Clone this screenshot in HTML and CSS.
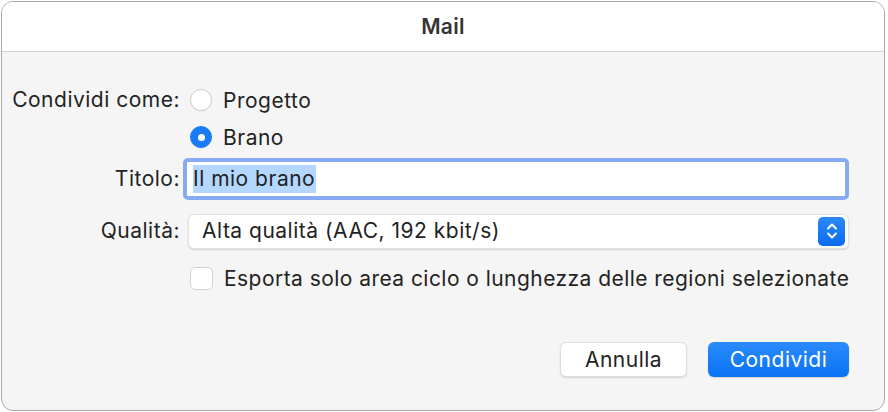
FILE: index.html
```html
<!DOCTYPE html>
<html lang="it">
<head>
    <meta charset="UTF-8">
    <meta name="viewport" content="width=device-width, initial-scale=1.0">
    <title>Mail</title>
    <link rel="stylesheet" href="styles.css">
</head>
<body>
    <div class="window">
        <div class="titlebar">Mail</div>
        <div class="content">
            <div class="form">
                <div class="label">Condividi come:</div>
                <div class="control">
                    <span class="radio"></span>
                    <span class="text">Progetto</span>
                </div>

                <div class="label"></div>
                <div class="control row-brano">
                    <span class="radio checked"></span>
                    <span class="text">Brano</span>
                </div>

                <div class="label row-title">Titolo:</div>
                <div class="control row-title">
                    <div class="input-ring">
                        <div class="input"><span class="selected">Il mio brano</span></div>
                    </div>
                </div>

                <div class="label row-quality">Qualità:</div>
                <div class="control row-quality">
                    <div class="select">
                        <span class="select-text">Alta qualità (AAC, 192 kbit/s)</span>
                        <span class="stepper">
                            <svg width="14" height="20" viewBox="0 0 14 20">
                                <path d="M3 7.5 L7 3.5 L11 7.5" fill="none" stroke="#fff" stroke-width="2" stroke-linecap="round" stroke-linejoin="round"/>
                                <path d="M3 12.5 L7 16.5 L11 12.5" fill="none" stroke="#fff" stroke-width="2" stroke-linecap="round" stroke-linejoin="round"/>
                            </svg>
                        </span>
                    </div>
                </div>

                <div class="label"></div>
                <div class="control row-check">
                    <span class="checkbox"></span>
                    <span class="text">Esporta solo area ciclo o lunghezza delle regioni selezionate</span>
                </div>
            </div>
            <div class="buttons">
                <button class="btn">Annulla</button>
                <button class="btn primary">Condividi</button>
            </div>
        </div>
    </div>
</body>
</html>
```

FILE: styles.css
```css
body{
    margin: 0;
    background-color: #ffffff;
    font-family: Inter, "Noto Sans", sans-serif;
    color: #232323;
}
.window{
    margin: 1px;
    width: 882px;
    height: 408px;
    border: 1px solid #a8a8a8;
    border-radius: 12px;
    overflow: hidden;
    background-color: #f5f5f5;
    display: flex;
    flex-direction: column;
}
.titlebar{
    height: 49px;
    background-color: #ffffff;
    border-bottom: 1px solid #d2d2d2;
    display: flex;
    justify-content: center;
    align-items: center;
    font-size: 21px;
    font-weight: 600;
    letter-spacing: 0.3px;
    color: #333;
}
.content{
    flex: 1;
    padding: 33px 35px 0 0;
}
.form{
    display: grid;
    grid-template-columns: 178px 1fr;
    column-gap: 7px;
    align-items: center;
    font-size: 21px;
    letter-spacing: 0.5px;
}
.label{
    text-align: right;
    height: 30px;
    line-height: 30px;
}
.control{
    height: 30px;
    display: flex;
    align-items: center;
    white-space: nowrap;
}
.row-brano{
    margin-top: 7px;
}
.label.row-title, .control.row-title{
    height: 42px;
    line-height: 42px;
    margin-top: 6px;
}
.control.row-title{
    margin-left: -4px;
}
.label.row-quality, .control.row-quality{
    height: 36px;
    line-height: 36px;
    margin-top: 13px;
}
.control.row-check{
    margin-top: 14px;
    letter-spacing: 0.45px;
}
.radio{
    width: 22px;
    height: 22px;
    border-radius: 50%;
    background-color: #fff;
    border: 1px solid #d0d0d0;
    box-shadow: 0 0.5px 1px rgba(0,0,0,0.08);
    margin-left: 3px;
    margin-right: 11px;
    box-sizing: border-box;
    position: relative;
    flex-shrink: 0;
}
.radio.checked{
    background-color: #1a7bf6;
    border-color: #1a7bf6;
}
.radio.checked::after{
    content: "";
    position: absolute;
    left: 6.5px;
    top: 6.5px;
    width: 7px;
    height: 7px;
    border-radius: 50%;
    background-color: #fff;
}
.checkbox{
    width: 23px;
    height: 23px;
    border-radius: 5px;
    background-color: #fff;
    border: 1px solid #d4d4d4;
    box-sizing: border-box;
    margin-left: 3px;
    margin-right: 11px;
    flex-shrink: 0;
}
.input-ring{
    flex: 1;
    height: 42px;
    box-sizing: border-box;
    border: 4px solid #86abf4;
    border-radius: 5px;
    background-color: #fff;
    display: flex;
    align-items: center;
}
.input{
    flex: 1;
    height: 34px;
    line-height: 30px;
    padding-left: 6px;
    display: flex;
    align-items: center;
}
.selected{
    background-color: #b3d7ff;
    line-height: 28px;
    padding-right: 1px;
}
.select{
    flex: 1;
    height: 35px;
    box-sizing: border-box;
    background-color: #fff;
    border-radius: 6px;
    border: 1px solid #e2e2e2;
    box-shadow: 0 1px 1.5px rgba(0,0,0,0.15);
    display: flex;
    align-items: center;
    justify-content: space-between;
    padding: 0 3px 0 13px;
    margin-left: 1px;
}
.select-text{
    line-height: 30px;
}
.stepper{
    width: 27px;
    height: 29px;
    border-radius: 5px;
    background: linear-gradient(#2a89fb, #0a6cf0);
    display: flex;
    align-items: center;
    justify-content: center;
}
.buttons{
    display: flex;
    justify-content: flex-end;
    gap: 21px;
    margin-top: 49px;
}
.btn{
    height: 35px;
    font-family: Inter, "Noto Sans", sans-serif;
    font-size: 21px;
    letter-spacing: 0.5px;
    border-radius: 6px;
    border: 1px solid #dedede;
    background-color: #fff;
    color: #232323;
    box-shadow: 0 1px 1.5px rgba(0,0,0,0.15);
    padding: 0;
    width: 127px;
}
.btn.primary{
    width: 141px;
    border: none;
    color: #fff;
    background: linear-gradient(#2a8bfc, #0a73f4);
}
```
